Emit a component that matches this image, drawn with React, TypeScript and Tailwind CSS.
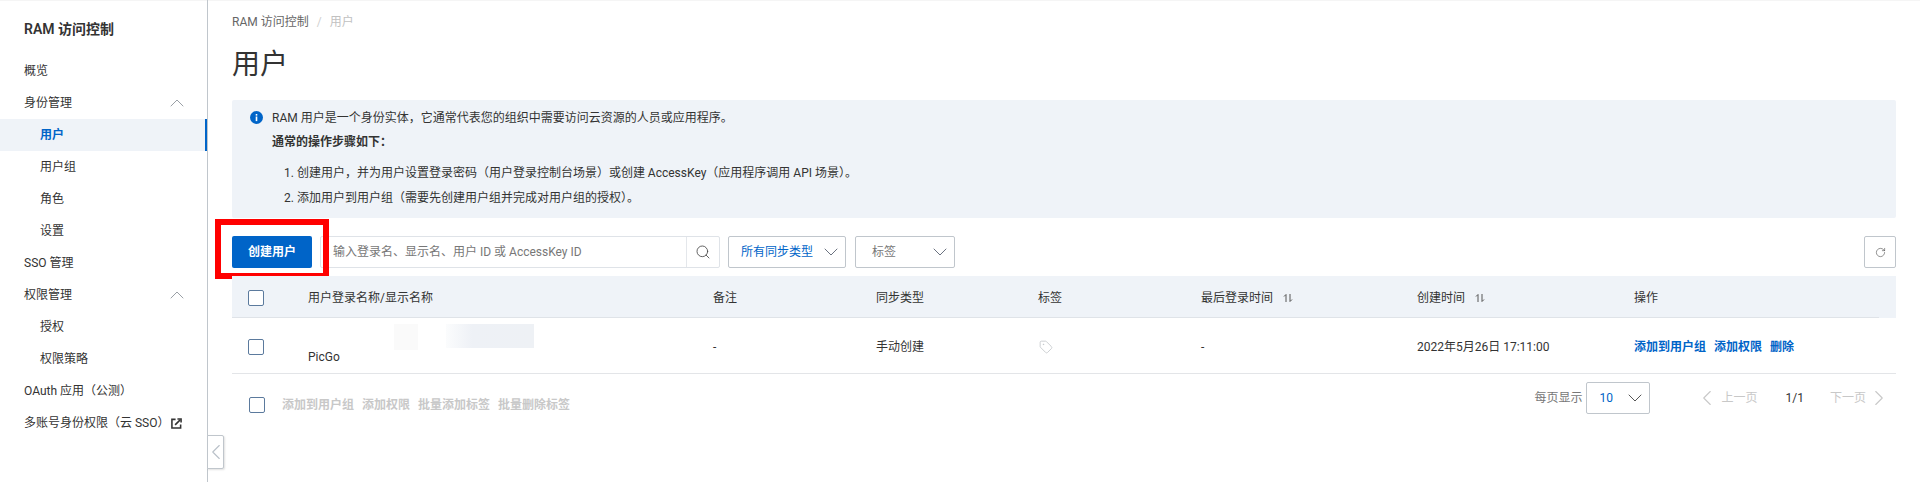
import React from "react";
import { ChevronUp, ChevronDown, ChevronLeft, ChevronRight, Search, RotateCw, Tag } from "lucide-react";

const font = { fontFamily: 'Roboto, "Noto Sans CJK SC", sans-serif' };

function NavItem({ label, sub, active, open, children }: { label: string; sub?: boolean; active?: boolean; open?: boolean; children?: React.ReactNode }) {
  return (
    <div
      className={`h-8 flex items-center justify-between text-[12px] pr-[18px] ${sub ? "pl-10" : "pl-6"} ${
        active ? "bg-[#eff3f8] border-r-2 border-[#0064c8] text-[#0064c8] font-semibold" : "text-[#333333]"
      }`}
    >
      <span className="flex items-center">{label}{children}</span>
      {open && <ChevronUp className="w-6 h-6 -my-2 text-[#9aa0a6]" strokeWidth={1} />}
    </div>
  );
}

function Checkbox() {
  return <span className="block w-4 h-4 rounded-[2px] border border-[#5b7a9d] bg-white shrink-0" />;
}

function SortIcon() {
  return (
    <svg width="10" height="10" viewBox="0 0 10 10" className="ml-[10px] text-[#555]" fill="none" stroke="currentColor" strokeWidth="1">
      <path d="M3 9V1.5L1 3.5" />
      <path d="M7 1v7.5L9 6.5" />
    </svg>
  );
}

export default function App() {
  const cols = ["w-[76px]", "w-[405px]", "w-[163px]", "w-[162px]", "w-[163px]", "w-[216px]", "w-[217px]"];
  return (
    <div className="flex h-[482px] w-[1920px] overflow-hidden bg-white text-[12px] text-[#333333] shadow-[inset_0_1px_0_#f5f5f5]" style={font}>
      <aside className="relative w-[208px] shrink-0 border-r border-[#c0c6cc]">
        <div className="h-[55px] pt-[20px] pl-6 text-[14px] leading-[18px] font-semibold text-[#333333]">RAM 访问控制</div>
        <nav>
          <NavItem label="概览" />
          <NavItem label="身份管理" open />
          <NavItem label="用户" sub active />
          <NavItem label="用户组" sub />
          <NavItem label="角色" sub />
          <NavItem label="设置" sub />
          <NavItem label="SSO 管理" />
          <NavItem label="权限管理" open />
          <NavItem label="授权" sub />
          <NavItem label="权限策略" sub />
          <NavItem label="OAuth 应用（公测）" />
          <NavItem label="多账号身份权限（云 SSO）">
            <svg width="11" height="11" viewBox="0 0 12 12" className="ml-[2px]" fill="none" stroke="#333" strokeWidth="1.7">
              <path d="M5 1.5H1v9.5h9.5V7" />
              <path d="M4.5 7.5 10 2" />
              <path d="M7 1h4v4" />
            </svg>
          </NavItem>
        </nav>
        <div className="absolute left-[207px] top-[435px] w-[17px] h-[34px] bg-white border border-[#c0c6cc] rounded-r-[2px] shadow-[1px_1px_2px_rgba(0,0,0,0.12)] flex items-center justify-center">
          <ChevronLeft className="w-[26px] h-[26px] shrink-0 text-[#b9c0c8]" strokeWidth={1} />
        </div>
      </aside>

      <main className="w-[1712px] pl-6 pr-6">
        <div className="h-[18px] mt-[13px] flex items-center text-[12px]">
          <span className="text-[#666666]">RAM 访问控制</span>
          <span className="mx-[8px] text-[#d0d0d0]">/</span>
          <span className="text-[#c1c1c1]">用户</span>
        </div>
        <h1 className="h-10 mt-[14px] text-[28px] leading-10 font-normal text-[#333333]">用户</h1>

        <div className="relative mt-[15px] h-[118px] bg-[#eff3f8] rounded-[2px] pl-10 pt-[10px] text-[12px] leading-[16px]">
          <svg width="13" height="13" viewBox="0 0 13 13" className="absolute left-[18px] top-[11px]">
            <circle cx="6.5" cy="6.5" r="6.5" fill="#0064c8" />
            <rect x="5.7" y="5.5" width="1.6" height="4.6" fill="#fff" />
            <rect x="5.7" y="3" width="1.6" height="1.6" fill="#fff" />
          </svg>
          <div>RAM 用户是一个身份实体，它通常代表您的组织中需要访问云资源的人员或应用程序。</div>
          <div className="mt-[8px] font-semibold">通常的操作步骤如下：</div>
          <ol className="mt-[15px] pl-3">
            <li>1. 创建用户，并为用户设置登录密码（用户登录控制台场景）或创建 AccessKey（应用程序调用 API 场景）。</li>
            <li className="mt-[9px]">2. 添加用户到用户组（需要先创建用户组并完成对用户组的授权）。</li>
          </ol>
        </div>

        <div className="relative mt-[18px] h-8 flex items-stretch">
          <button className="w-20 bg-[#0064c8] text-white text-[12px] font-semibold rounded-[2px]">创建用户</button>
          <div className="ml-2 w-[400px] flex border border-[#dfe3e8] rounded-[2px]">
            <span className="flex-1 pl-[12px] flex items-center text-[#777777]">输入登录名、显示名、用户 ID 或 AccessKey ID</span>
            <span className="w-[33px] border-l border-[#e4e7eb] flex items-center justify-center">
              <Search className="w-4 h-4 text-[#444]" strokeWidth={1.25} />
            </span>
          </div>
          <div className="ml-2 w-[118px] border border-[#c0c6cc] rounded-[2px] flex items-center justify-between pl-3 pr-[2px] text-[#0064c8]">
            所有同步类型
            <ChevronDown className="w-6 h-6 text-[#6b7280]" strokeWidth={1} />
          </div>
          <div className="ml-[9px] w-[100px] border border-[#c0c6cc] rounded-[2px] flex items-center justify-between pl-4 pr-[2px] text-[#777777]">
            标签
            <ChevronDown className="w-6 h-6 text-[#6b7280]" strokeWidth={1} />
          </div>
          <div className="ml-auto w-8 border border-[#c0c6cc] rounded-[2px] flex items-center justify-center">
            <RotateCw className="w-[11px] h-[11px] text-[#444]" strokeWidth={1.25} />
          </div>
          <div className="absolute -left-[17px] -top-[17px] w-[114px] h-[60px] border-[6px] border-[#ff0000]" />
        </div>

        <div className="mt-2 h-[42px] pt-[2px] bg-[#eff3f8] relative flex items-center text-[#333333]">
          <div className={`${cols[0]} pl-4`}><Checkbox /></div>
          <div className={cols[1]}>用户登录名称/显示名称</div>
          <div className={cols[2]}>备注</div>
          <div className={cols[3]}>同步类型</div>
          <div className={cols[4]}>标签</div>
          <div className={`${cols[5]} flex items-center`}>最后登录时间<SortIcon /></div>
          <div className={`${cols[6]} flex items-center`}>创建时间<SortIcon /></div>
          <div>操作</div>
          <div className="absolute left-0 bottom-0 h-px w-[1647px] bg-[#dfe3e8]" />
        </div>

        <div className="relative h-14 pt-[2px] flex items-center border-b border-[#e3e5e8]">
          <div className={`${cols[0]} pl-4`}><Checkbox /></div>
          <div className={`${cols[1]} pt-[20px]`}>PicGo</div>
          <div className={cols[2]}>-</div>
          <div className={cols[3]}>手动创建</div>
          <div className={cols[4]}><Tag className="w-[14px] h-[14px] ml-[1px] text-[#c6c9cd]" strokeWidth={1.5} /></div>
          <div className={cols[5]}>-</div>
          <div className={cols[6]}>2022年5月26日 17:11:00</div>
          <div className="flex gap-2 font-semibold text-[#0064c8]">
            <span>添加到用户组</span>
            <span>添加权限</span>
            <span>删除</span>
          </div>
          <div className="absolute left-[162px] top-[6px] w-[24px] h-[26px] bg-[#fafafa]" />
          <div className="absolute left-[214px] top-[6px] w-[88px] h-[24px] bg-gradient-to-r from-[#fbfcfd] via-[#eef1f6] via-30% to-[#eef1f5]" />
        </div>

        <div className="h-[60px] flex items-start pt-[8px] relative">
          <div className="pl-[17px] mt-[15px]"><Checkbox /></div>
          <div className="ml-[17px] mt-[14px] flex gap-2 text-[#c8c8c8] font-semibold">
            <span>添加到用户组</span>
            <span>添加权限</span>
            <span>批量添加标签</span>
            <span>批量删除标签</span>
          </div>
          <div className="ml-auto flex items-center pr-[4px]">
            <span className="text-[#777777]">每页显示</span>
            <div className="ml-[3px] w-16 h-8 border border-[#c0c6cc] rounded-[2px] flex items-center justify-between pl-[13px] pr-[2px] text-[#0064c8]">
              10
              <ChevronDown className="w-6 h-6 text-[#555]" strokeWidth={1} />
            </div>
            <ChevronLeft className="ml-[44px] w-[26px] h-[26px] text-[#c8c8c8]" strokeWidth={1} />
            <span className="ml-[2px] text-[#c8c8c8]">上一页</span>
            <span className="ml-7 text-[#333333]">1/1</span>
            <span className="ml-[26px] text-[#c8c8c8]">下一页</span>
            <ChevronRight className="w-[26px] h-[26px] text-[#c8c8c8]" strokeWidth={1} />
          </div>
        </div>
      </main>
    </div>
  );
}
